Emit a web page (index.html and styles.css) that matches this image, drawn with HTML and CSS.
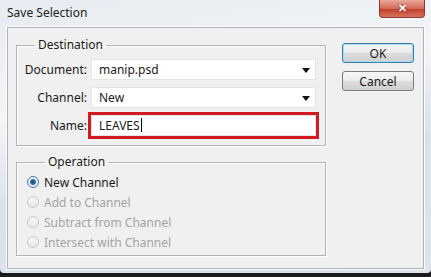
FILE: index.html
```html
<!DOCTYPE html>
<html lang="en">
<head>
  <meta charset="UTF-8" />
  <title>Save Selection</title>
  <link rel="stylesheet" href="styles.css">
</head>
<body>

  <div class="window">
    <div class="titlebar">
      <span class="title">Save Selection</span>
      <div class="close-btn">&#x2715;</div>
    </div>

    <div class="panel">
      <div class="groups">
        <fieldset class="group dest">
          <legend>Destination</legend>
          <div class="row">
            <label>Document:</label>
            <div class="field select">manip.psd</div>
          </div>
          <div class="row">
            <label>Channel:</label>
            <div class="field select">New</div>
          </div>
          <div class="row">
            <label>Name:</label>
            <div class="field highlight">LEAVES<span class="caret"></span></div>
          </div>
        </fieldset>

        <fieldset class="group operation">
          <legend>Operation</legend>
          <div class="radio-row"><span class="radio checked"></span>New Channel</div>
          <div class="radio-row disabled"><span class="radio"></span>Add to Channel</div>
          <div class="radio-row disabled"><span class="radio"></span>Subtract from Channel</div>
          <div class="radio-row disabled"><span class="radio"></span>Intersect with Channel</div>
        </fieldset>
      </div>

      <div class="buttons">
        <button class="btn default">OK</button>
        <button class="btn">Cancel</button>
      </div>
    </div>
  </div>

</body>
</html>
```

FILE: styles.css
```css
* {
  box-sizing: border-box;
  margin: 0;
  padding: 0;
}

html, body {
  width: 431px;
  height: 277px;
  overflow: hidden;
  background: #1c1c1c;
  font-family: 'Noto Sans', 'Open Sans', sans-serif;
  font-size: 11.5px;
  color: #1a1a1a;
}

.window {
  width: 431px;
  height: 273px;
  padding: 0 7px 4px 7px;
  display: flex;
  flex-direction: column;
  background: linear-gradient(170deg, #e6ebf1 0%, #f3f5f8 35%, #d9e1ea 60%, #dde4ec 100%);
  border-radius: 0 0 4px 4px;
}

.titlebar {
  height: 27px;
  display: flex;
  justify-content: space-between;
  align-items: flex-start;
}

.title {
  margin-top: 4px;
  font-size: 12px;
  color: #222;
}

.close-btn {
  width: 46px;
  height: 18px;
  margin-right: -1px;
  border: 1px solid #8a3a30;
  border-top: none;
  border-radius: 0 0 4px 4px;
  background: linear-gradient(#e9a99b, #d36a56 50%, #c0402c 55%, #d8735c);
  color: #fff;
  font-size: 11px;
  font-weight: bold;
  text-align: center;
  line-height: 16px;
  text-shadow: 0 0 2px #6b1e14;
}

.panel {
  flex: 1;
  display: flex;
  gap: 16px;
  padding: 9px 0 0 8px;
  background: #f0f0f0;
  border: 1px solid #aab3bd;
  box-shadow: 0 0 0 1px #fdfdfd;
}

.groups {
  width: 310px;
  display: flex;
  flex-direction: column;
  gap: 8px;
}

.group {
  border: 1px solid #b3b3b3;
  box-shadow: inset 1px 1px 0 #fff, 1px 1px 0 #fff;
}

.group legend {
  margin-left: 18px;
  padding: 0 3px;
  line-height: 16px;
  font-size: 12px;
}

.dest {
  padding: 6px 9px 9px 0;
}

.row {
  display: flex;
  align-items: center;
  gap: 4px;
  height: 21px;
  margin-bottom: 7px;
}

.row:last-child {
  margin-bottom: 0;
}

.row label {
  width: 70px;
  text-align: right;
  font-size: 12px;
}

.field {
  position: relative;
  flex: 1;
  height: 21px;
  padding-left: 7px;
  line-height: 20px;
  font-size: 12px;
  background: #fff;
  border: 1px solid #e4e4e4;
}

.field.select::after {
  content: "";
  position: absolute;
  right: 5px;
  top: 8px;
  border-left: 4px solid transparent;
  border-right: 4px solid transparent;
  border-top: 5px solid #111;
}

.field.highlight {
  outline: 3px solid #d11a22;
}

.caret {
  display: inline-block;
  width: 1px;
  height: 14px;
  margin-left: 1px;
  vertical-align: -2px;
  background: #000;
}

.operation {
  padding: 2px 0 3px 10px;
}

.radio-row {
  height: 20px;
  display: flex;
  align-items: center;
  gap: 5px;
  font-size: 12px;
}

.radio-row.disabled {
  color: #a3a3a3;
}

.radio {
  width: 12px;
  height: 12px;
  border-radius: 50%;
  border: 1px solid #c9c9c9;
  background: linear-gradient(#f7f7f7, #e9e9e9);
}

.radio.checked {
  border-color: #4f7fa8;
  background: radial-gradient(circle, #1d4f7f 0, #2f6fa6 2.5px, #eaf3fa 3.5px, #c7d9e8 100%);
}

.buttons {
  width: 72px;
  display: flex;
  flex-direction: column;
  gap: 8px;
  padding-top: 6px;
}

.btn {
  height: 20px;
  font-family: inherit;
  font-size: 12px;
  color: #1a1a1a;
  border: 1px solid #7c7c7c;
  border-radius: 3px;
  background: linear-gradient(#f6f6f6, #ebebeb 50%, #dcdcdc 52%, #d0d0d0);
}

.btn.default {
  border-color: #3d7bad;
  box-shadow: inset 0 0 0 1px #a8dcf4;
}
```
